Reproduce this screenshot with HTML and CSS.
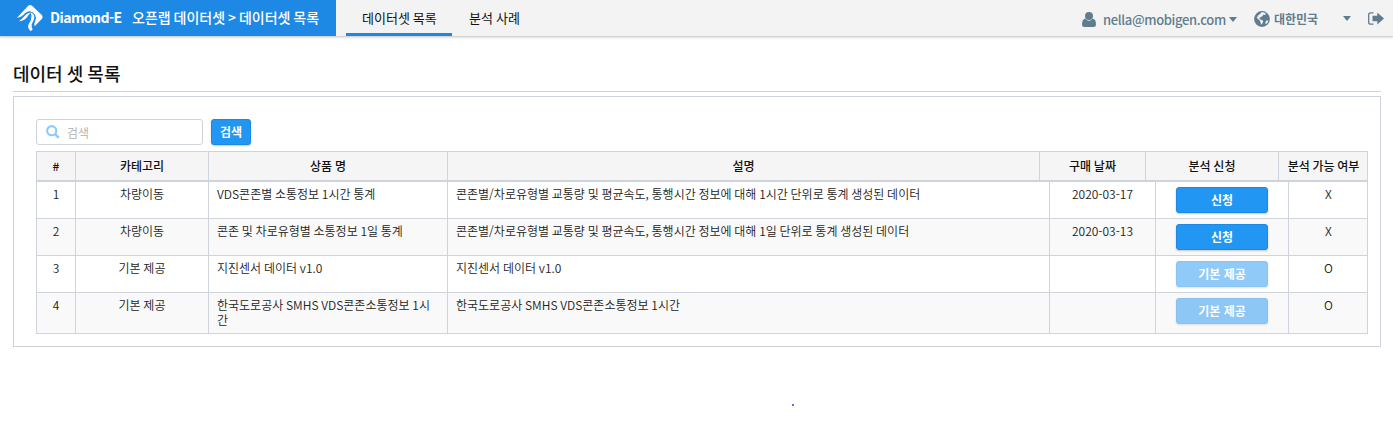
FILE: index.html
```html
<!DOCTYPE html>
<html lang="ko">
<head>
<meta charset="utf-8">
<title>데이터 셋 목록</title>
<link rel="stylesheet" href="styles.css">
</head>
<body>
<header class="topbar">
  <div class="brand">
    <svg class="logo" width="28" height="28" viewBox="48 12 84 84" fill="#fff">
      <path d="M51 53 84 18Q90 12 97 18L126 46Q130 51 126 56L104 79Q101 71 106 62 110 52 105 44 99 35 90 34 79 34 70 45 62 53 51 53Z"/>
      <path d="M57 64Q66 57 73 49 81 38 91 38 85 45 81 52 72 63 57 64Z"/>
      <path d="M91 37Q103 41 103 53 102 61 97 69 92 78 98 88L92 94Q81 84 86 72 94 62 94 52 95 44 91 37Z"/>
    </svg>
    <span class="brand-name">Diamond-E</span>
    <span class="brand-path">오픈랩 데이터셋 &gt; 데이터셋 목록</span>
  </div>
  <nav class="tabs">
    <a class="tab tab-active">데이터셋 목록</a>
    <a class="tab">분석 사례</a>
  </nav>
  <div class="account">
    <svg class="user-icon" width="14" height="15" viewBox="0 0 14 15" fill="#607d8f"><circle cx="7" cy="4" r="4"/><path d="M3.300 6.500Q5 8.700 7 8.700T10.700 6.500Q14 7.200 14 12.500 14 15 11.700 15H2.300Q0 15 0 12.500 0 7.200 3.300 6.500Z"/></svg>
    <span class="email">nella@mobigen.com</span>
    <svg class="caret" width="8" height="5" viewBox="0 0 8 5" fill="#607d8f"><path d="M0 0H8L4 5Z"/></svg>
    <svg class="globe-icon" width="16" height="16" viewBox="0 0 16 16"><circle cx="8" cy="8" r="7.900" fill="#607d8f"/><path fill="#f3f3f3" d="M7.500 1.300 9.500 1.200 12 2.400 11 4 9.500 3.600 8.500 5 6.500 6.300 5.300 7.500 6 8.500 8 9 9.300 10.300 8.500 12 7.500 13.800 6.600 12 6.200 10 4.300 8.200 2.800 6.800 4 4.500 6 3ZM12.500 9.500 14.300 9.500 13.500 11.700 11.800 13.300 11.300 11.500Z"/></svg>
    <span class="country">대한민국</span>
    <svg class="country-caret" width="8" height="5" viewBox="0 0 8 5" fill="#607d8f"><path d="M0 0H8L4 5Z"/></svg>
    <svg class="logout-icon" width="16" height="13" viewBox="0 0 16 13"><path d="M5.500.8H2.800Q.7.800.7 2.800V10.200Q.7 12.200 2.800 12.200H5.500" fill="none" stroke="#607d8f" stroke-width="1.300"/><path fill="#607d8f" d="M4.500 3.800H9.300V.5L16 6.500 9.300 12.500V9.200H4.500Z"/></svg>
  </div>
</header>
<main class="content">
  <h1 class="title">데이터 셋 목록</h1>
  <section class="panel">
    <div class="search-row">
      <div class="search-box">
        <svg width="14" height="14" viewBox="0 0 14 14" fill="none" stroke="#90caf9"><circle cx="5.700" cy="5.700" r="4.600" stroke-width="2.100"/><path d="m9.200 9.200 3.600 3.600" stroke-width="2.500"/></svg>
        <span>검색</span>
      </div>
      <button class="btn btn-search">검색</button>
    </div>
    <div class="table">
      <div class="row head"><div>#</div><div>카테고리</div><div>상품 명</div><div>설명</div><div>구매 날짜</div><div>분석 신청</div><div>분석 가능 여부</div></div>
      <div class="row"><div>1</div><div>차량이동</div><div class="left">VDS콘존별 소통정보 1시간 통계</div><div class="left">콘존별/차로유형별 교통량 및 평균속도, 통행시간 정보에 대해 1시간 단위로 통계 생성된 데이터</div><div>2020-03-17</div><div class="action"><button class="btn btn-row">신청</button></div><div>X</div></div>
      <div class="row even"><div>2</div><div>차량이동</div><div class="left">콘존 및 차로유형별 소통정보 1일 통계</div><div class="left">콘존별/차로유형별 교통량 및 평균속도, 통행시간 정보에 대해 1일 단위로 통계 생성된 데이터</div><div>2020-03-13</div><div class="action"><button class="btn btn-row">신청</button></div><div>X</div></div>
      <div class="row"><div>3</div><div>기본 제공</div><div class="left">지진센서 데이터 v1.0</div><div class="left">지진센서 데이터 v1.0</div><div></div><div class="action"><button class="btn btn-row btn-off">기본 제공</button></div><div>O</div></div>
      <div class="row even last"><div>4</div><div>기본 제공</div><div class="left">한국도로공사 SMHS VDS콘존소통정보 1시간</div><div class="left">한국도로공사 SMHS VDS콘존소통정보 1시간</div><div></div><div class="action"><button class="btn btn-row btn-off">기본 제공</button></div><div>O</div></div>
    </div>
  </section>
  <div class="dot"></div>
</main>
</body>
</html>
```
FILE: styles.css
```css
* { box-sizing: border-box; }
body { margin: 0; background: #fff; color: #222; font: 350 12px/15px "Noto Sans CJK KR", sans-serif; word-spacing: -.62px; overflow: hidden; }
svg { display: block; flex: none; }
.topbar { display: flex; height: 37px; background: #f3f3f3; border-bottom: 1px solid #d3d3d3; box-shadow: 0 1px 2px rgba(0,0,0,.12); white-space: nowrap; }
.brand { display: flex; align-items: center; width: 336px; height: 36px; padding: 0 0 2px 16px; background: #1e88e5; color: #fff; font-size: 14px; font-weight: 500; line-height: 20px; }
.logo { margin-top: 2px; }
.brand-name { flex: none; width: 88px; padding-left: 6px; font-weight: 700; letter-spacing: -.55px; }
.brand-path { word-spacing: -1px; }
.tabs { display: flex; padding-left: 10px; color: #111; font-size: 13px; font-weight: 400; }
.tab { height: 36px; padding: 0 16px; line-height: 35px; border-bottom: 3px solid transparent; }
.tab-active { width: 106px; border-color: #1e88e5; }
.tab + .tab { padding-left: 17px; }
.account { display: flex; align-items: center; height: 36px; margin-left: auto; padding: 2px 9px 0 0; color: #607d8f; font-weight: 500; }
.email { width: 126px; margin-left: 7px; padding-top: 2px; font-size: 13px; line-height: 18px; letter-spacing: -.35px; }
.globe-icon { margin-left: 17px; }
.country { width: 73px; padding: 0 0 2px 4px; font-weight: 700; }
.country-caret { margin: 0 17px 2px 0; }
.logout-icon { margin-bottom: 2px; }
.content { padding: 26px 12px 0 13px; }
.title { height: 29px; margin: 0 0 4px; border-bottom: 1px solid #cfd3db; color: #111; font-size: 18px; font-weight: 500; line-height: 21px; word-spacing: -1px; }
.panel { height: 251px; padding: 22px 12px 0 22px; border: 1px solid #cfd3db; }
.search-row { display: flex; gap: 8px; height: 26px; margin-bottom: 6px; }
.search-box { display: flex; align-items: center; gap: 7px; width: 167px; padding-left: 9px; border: 1px solid #cfd3db; border-radius: 3px; color: #b0b0b0; }
.btn { display: block; height: 26px; margin: 0; padding: 0; border: 1px solid #1e88e5; border-radius: 3px; background: #2196f3; box-shadow: 0 1px 2px rgba(0,0,0,.22); color: #fff; font: 700 12px/24px "Noto Sans CJK KR", sans-serif; }
.btn-search { width: 40px; }
.btn-row { width: 92px; margin: 0 auto; }
.btn-off { opacity: .5; }
.table { width: 1332px; border: solid #cfd3db; border-width: 1px 0 0; }
.row { display: grid; grid-template-columns: 39px 133px 239px 602px 106px 133px 80px; height: 37px; border-right: 1px solid #cfd3db; border-bottom: 1px solid #cfd3db; text-align: center; }
.row > div { min-width: 0; padding: 4px 4px 0; border-left: 1px solid #cfd3db; }
.row > .left { padding: 4px 8px 0; text-align: left; }
.row > .action { padding-top: 5px; }
.head { grid-template-columns: 39px 133px 239px 592px 106px 133px 90px; height: 30px; border-bottom-width: 2px; background: #f5f5f5; color: #111; font-weight: 500; }
.head > div { padding: 6px 0 0; white-space: nowrap; }
.even { background: #f9f9f9; }
.last { height: 41px; }
.dot { width: 2px; height: 2px; margin: 57px 0 0 779px; background: #3333ff; border-radius: 1px; }
```
